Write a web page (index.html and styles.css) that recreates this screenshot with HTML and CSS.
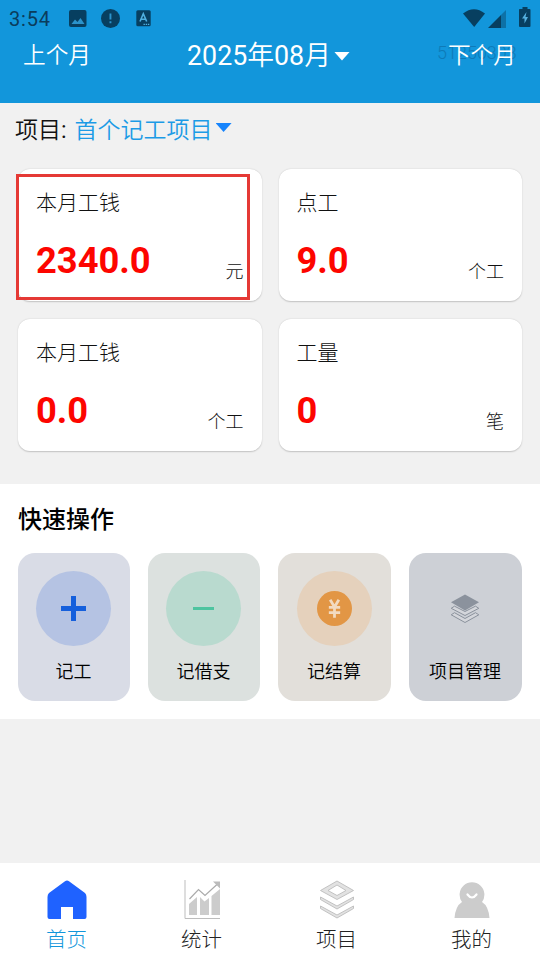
FILE: index.html
```html
<!DOCTYPE html>
<html lang="zh-CN">
<head>
<meta charset="utf-8">
<title>记工</title>
<link rel="stylesheet" href="styles.css">
</head>
<body>
<div class="app">
  <header class="header">
    <div class="status">
      <span class="clock">3:54</span>
      <svg class="st-img" width="18" height="18" viewBox="0 0 18 18"><rect width="17.5" height="17" rx="2"/><path class="cut" d="M2.500 14l3.500-4.500 2.500 2.500 3-4 4 6z"/></svg>
      <svg class="st-alert" width="20" height="20" viewBox="0 0 20 20"><circle cx="9.500" cy="9.500" r="9.500"/><path class="cut" d="M8.500 4.500h1.900v6H8.500zM8.500 12.300h1.900v2H8.500z"/></svg>
      <svg class="st-a" width="16" height="17" viewBox="0 0 16 17"><rect x=".3" y=".3" width="14.400" height="16" rx="1.500"/><path class="cutline" d="M4 11.500L7.300 3.800 10.700 11.500M5.200 9.300h4.200"/><path class="cutline dots" d="M7.500 14.300h6"/></svg>
      <svg class="st-wifi" width="23" height="19" viewBox="0 0 23 19"><path d="M0 4.500Q11-4 22 4.500L11.200 18z"/></svg>
      <svg class="st-signal" width="18" height="18" viewBox="0 0 18 18"><path d="M0 18L13 5V18z"/><path class="dim" d="M13 5L18 0v18h-5z"/></svg>
      <svg class="st-batt" width="12" height="21" viewBox="0 0 12 21"><path d="M0 2.500Q0 2 1 2H3.500V0h5v2H10.500Q11.500 2 11.500 3V19Q11.500 20 10.500 20H1Q0 20 0 19z"/><path class="cut bolt" d="M7.500 5L3 11.500h2.500v5L9 10H6.500z"/></svg>
    </div>
    <div class="months">
      <span class="side">上个月</span>
      <span class="current"><span><span class="num">2025</span>年<span class="num">08</span>月</span><i class="caret"></i></span>
      <span class="side next"><span class="mark">51250303</span><span class="over">下个月</span></span>
    </div>
  </header>

  <div class="project"><span>项目<span class="num">:</span></span><span class="name">首个记工项目</span><i class="caret blue"></i></div>

  <section class="cards">
    <div class="card"><div class="label">本月工钱</div><div class="row"><b>2340.0</b><span>元</span></div><div class="frame"></div></div>
    <div class="card"><div class="label">点工</div><div class="row"><b>9.0</b><span>个工</span></div></div>
    <div class="card"><div class="label">本月工钱</div><div class="row"><b>0.0</b><span>个工</span></div></div>
    <div class="card"><div class="label">工量</div><div class="row"><b>0</b><span>笔</span></div></div>
  </section>

  <section class="quick">
    <h2>快速操作</h2>
    <div class="actions">
      <div class="action work"><div class="disc"><svg width="25" height="25" viewBox="0 0 25 25"><path d="M12.500 0v25M0 12.500h25" stroke="#155fdc" stroke-width="5"/></svg></div><span>记工</span></div>
      <div class="action loan"><div class="disc"><svg width="21" height="3" viewBox="0 0 21 3"><path d="M0 1.500h21" stroke="#4ec4a0" stroke-width="3"/></svg></div><span>记借支</span></div>
      <div class="action settle"><div class="disc"><svg width="35" height="35" viewBox="0 0 34 34"><circle cx="17" cy="17" r="17" fill="#e29645"/><path d="M12.800 8.500l4.200 7 4.200-7M11.500 16h11M11.500 21h11M17 15.500v10.500" fill="none" stroke="#f2dac0" stroke-width="2.700"/></svg></div><span>记结算</span></div>
      <div class="action manage"><div class="disc"><svg width="30" height="30" viewBox="0 0 30 30"><path d="M15 .5L29 8.300 15 16.500 1 8.300z" fill="#8b929d"/><path d="M4.500 12.200L1.200 14.300 15 21.500 28.800 14.300 25.500 12.200 15 17.500zM4.500 18.700L1.200 20.800 15 28.500 28.800 20.800 25.500 18.700 15 24.500z" fill="#d4d6db" stroke="#8b929d" stroke-width="1"/></svg></div><span>项目管理</span></div>
    </div>
  </section>

  <nav class="tabs">
    <div class="tab active"><svg width="40" height="40" viewBox="0 0 40 40"><path d="M2 13L18 1.200Q20 0 22 1.200L38 13Q39.500 14.500 39.500 17V37Q39.500 39 37.500 39H26V27H14V39H2.500Q.5 39 .5 37V17Q.5 14.500 2 13z" fill="#1f62ff"/></svg><span>首页</span></div>
    <div class="tab"><svg width="40" height="40" viewBox="0 0 40 40"><path d="M3 0V38.500H38" fill="none" stroke="#bdbdbd" stroke-width="1"/><path d="M7 24l8-7V35H7zM18 17l4.500 4.500L27 18V35H18zM29.500 16L38 9V35h-8.500z" fill="#ccc"/><path d="M7.500 19L16.500 9.500 23 15.500 35.500 4" fill="none" stroke="#aaa" stroke-width="1.200"/><path d="M31 1.500H38V8.500L35.500 6z" fill="#bbb"/></svg><span>统计</span></div>
    <div class="tab"><svg width="40" height="40" viewBox="0 0 40 40"><path d="M20 1L36.500 10.500 20 19.500 3.500 10.500zM20 5L29 10.500 20 15.500 11 10.500zM3.500 17L20 26 36.500 17V19.500L20 29 3.500 19.500zM3.500 26L20 35 36.500 26V28.500L20 38 3.500 28.500z" fill="#e2e2e2" stroke="#bcbcbc" stroke-width=".9" fill-rule="evenodd"/></svg><span>项目</span></div>
    <div class="tab"><svg width="40" height="40" viewBox="0 0 40 40"><path d="M10 22A12.400 12.400 0 1 1 30 22Q36.500 26 37.500 38H2.500Q3.500 26 10 22z" fill="#ccc"/><path d="M15.500 14.500Q20 20.500 24.500 14.500" fill="none" stroke="#fff" stroke-width="2.200" stroke-linecap="round"/></svg><span>我的</span></div>
  </nav>
</div>
</body>
</html>
```
FILE: styles.css
```css
* { box-sizing: border-box; }
body {
  margin: 0;
  background: #f1f1f1;
  color: #111;
  font-family: Roboto, "Noto Sans CJK SC", sans-serif;
}
.app { width: 540px; height: 960px; display: flex; flex-direction: column; overflow: hidden; }
svg { display: block; flex: none; }
.num { font-weight: 400; }
.header { height: 103px; background: #1296db; color: #fff; flex: none; }
.status { height: 37px; padding: 0 9px 0 9px; display: flex; align-items: center; color: #0b3c5c; }
.status svg { fill: #073f60; }
.status .cut { fill: #2b93cb; }
.status .bolt { fill: #55b0df; }
.status .cutline { fill: none; stroke: #4fb0e0; stroke-width: 1.6; }
.status .dots { stroke-width: 1.2; stroke-dasharray: 1.4 .8; }
.status .dim { fill: #0d71a7; }
.clock { width: 60px; font-size: 20px; letter-spacing: .8px; }
.st-alert { margin-left: 14px; }
.st-a { margin-left: 15px; }
.st-wifi { margin-left: auto; }
.st-signal { margin-left: 2px; }
.status .st-batt { margin: -3px 0 0 13px; }
.months { display: flex; align-items: center; justify-content: space-between; height: 36px; padding: 2px 24px 0 23px; }
.side { font-size: 22.7px; line-height: 36px; position: relative; font-weight: 350; }
.over { position: relative; }
.mark { position: absolute; left: -11px; top: -3px; font-size: 18px; line-height: 36px; font-weight: 300; color: #0b5f94; opacity: .5; }
.current { font-size: 26.8px; line-height: 36px; display: flex; align-items: center; gap: 3px; padding-right: 2px; font-weight: 350; }
.caret { width: 16px; height: 9px; background: #fff; clip-path: polygon(0 0, 100% 0, 50% 100%); }
.caret.blue { background: #1684fc; margin-left: 3px; }
.project { height: 50px; padding: 0 0 1px 15px; display: flex; align-items: center; font-size: 23px; font-weight: 350; flex: none; }
.project .name { margin-left: 8px; color: #1c9be6; }
.cards { display: grid; grid-template-columns: 1fr 1fr; grid-auto-rows: 132px; gap: 18px 17px; padding: 16px 18px 33px; flex: none; }
.card { position: relative; background: #fff; border-radius: 12px; padding: 18px 18px 0; box-shadow: 0 .5px 1.5px #0003; }
.label { font-size: 21px; line-height: 32px; font-weight: 300; }
.row { display: flex; justify-content: space-between; align-items: flex-start; margin-top: 20px; line-height: 44px; }
.row b { font-size: 36.3px; color: #fd0500; }
.row span { font-size: 18px; font-weight: 300; padding-top: 11px; }
.frame { position: absolute; left: -2px; top: 5px; width: 234px; height: 126px; border: 3px solid #e53935; }
.quick { height: 235px; background: #fff; padding: 18px 18px 0; flex: none; }
h2 { margin: 0 0 15px; font-size: 24px; line-height: 36px; font-weight: 500; color: #000; }
.actions { display: grid; grid-template-columns: 112px 112px 113px 113px; justify-content: space-between; }
.action { height: 148px; border-radius: 17px; padding: 18px 1px 0 0; display: flex; flex-direction: column; align-items: center; font-size: 18px; font-weight: 350; color: #000; }
.action span { margin-top: 13px; line-height: 26px; }
.disc { width: 75px; height: 75px; border-radius: 50%; display: flex; align-items: center; justify-content: center; }
.work { background: #d9dce6; }
.work .disc { background: #b5c3e3; }
.loan { background: #dce1df; }
.loan .disc { background: #b9dacf; }
.settle { background: #e2dfda; }
.settle .disc { background: #e5d1bc; }
.manage { background: #cdd0d6; }
.tabs { margin-top: auto; height: 97px; background: #fff; display: grid; grid-template-columns: repeat(4, 1fr); flex: none; }
.tab { display: flex; flex-direction: column; align-items: center; padding: 17px 2px 0 0; font-size: 20.5px; font-weight: 300; color: #222; }
.tab span { line-height: 30px; margin-top: 5px; }
.tab.active { color: #1296db; }
```
